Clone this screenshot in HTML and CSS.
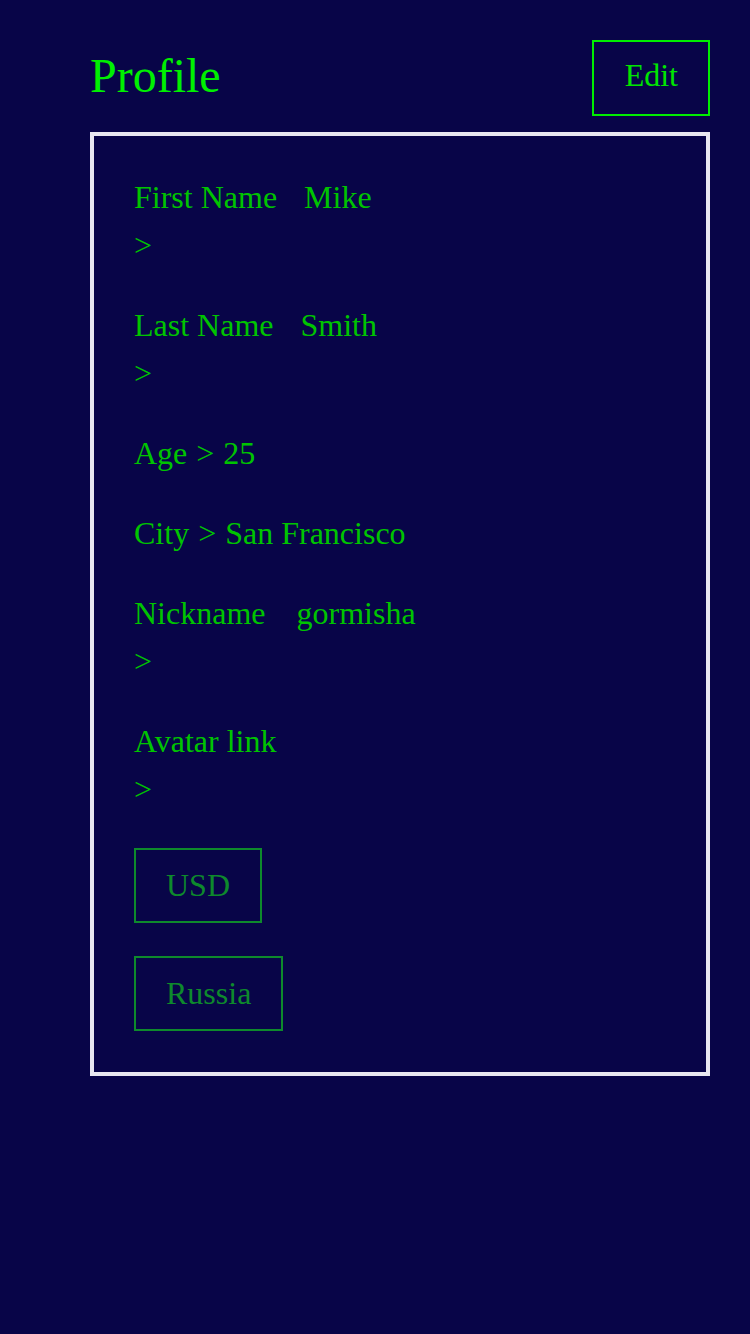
FILE: index.html
```html
<!DOCTYPE html>
<html>
<head>
<meta charset="utf-8">
<link rel="stylesheet" href="styles.css">
</head>
<body>
<div class="page">
  <header class="header">
    <h1 class="title">Profile</h1>
    <button class="edit-btn">Edit</button>
  </header>
  <section class="card">
    <div class="field">
      <div class="line"><span class="label">First Name</span><span class="value">Mike</span></div>
      <div class="line">&gt;</div>
    </div>
    <div class="field">
      <div class="line"><span class="label">Last Name</span><span class="value">Smith</span></div>
      <div class="line">&gt;</div>
    </div>
    <div class="field">
      <div class="line"><span class="label">Age</span><span class="arrow">&gt;</span><span>25</span></div>
    </div>
    <div class="field">
      <div class="line"><span class="label">City</span><span class="arrow">&gt;</span><span>San Francisco</span></div>
    </div>
    <div class="field">
      <div class="line"><span class="label">Nickname</span><span class="value value-wide">gormisha</span></div>
      <div class="line">&gt;</div>
    </div>
    <div class="field">
      <div class="line"><span class="label">Avatar link</span></div>
      <div class="line">&gt;</div>
    </div>
    <div class="options">
      <button class="opt-btn">USD</button>
      <button class="opt-btn">Russia</button>
    </div>
  </section>
</div>
</body>
</html>
```

FILE: styles.css
```css
html, body {
  margin: 0;
  padding: 0;
  background: #080548;
  height: 100%;
}
body {
  font-family: "Liberation Serif", "Times New Roman", serif;
}
.page {
  padding: 40px 40px 0 90px;
}
.header {
  display: flex;
  justify-content: space-between;
  align-items: center;
}
.title {
  margin: 0 0 6px 0;
  font-size: 48px;
  font-weight: normal;
  color: #00f000;
  line-height: 53px;
}
.edit-btn {
  font-family: inherit;
  font-size: 32px;
  color: #00e600;
  background: transparent;
  border: 2px solid #00ee00;
  padding: 15px 30px 21px 31px;
  line-height: 36px;
  margin: 0;
}
.card {
  margin-top: 16px;
  border: 4px solid #e8e8f0;
  padding: 37px 40px 41px 40px;
  display: flex;
  flex-direction: column;
  gap: 32px;
}
.field {
  font-size: 32px;
  line-height: 48px;
  color: #00c400;
}
.label {
  display: inline-block;
}
.arrow {
  margin: 0 9px;
}
.value {
  margin-left: 27px;
}
.value-wide {
  margin-left: 31px;
}
.options {
  display: flex;
  flex-direction: column;
  align-items: flex-start;
  gap: 33px;
  padding-top: 3px;
}
.opt-btn {
  font-family: inherit;
  font-size: 32px;
  color: #0e8a2c;
  background: transparent;
  border: 2px solid #0e8a2c;
  padding: 19px 30px;
  line-height: 33px;
  margin: 0;
}
```
